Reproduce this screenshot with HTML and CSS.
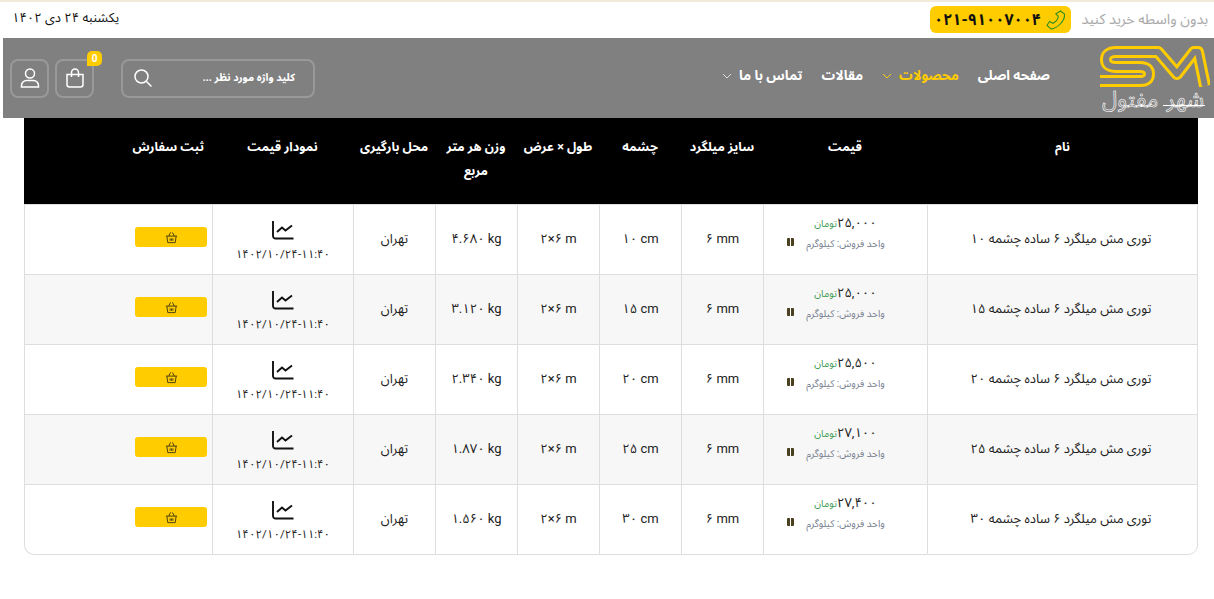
FILE: index.html
```html
<!DOCTYPE html>
<html lang="fa" dir="rtl">
<head>
<meta charset="utf-8">
<title>شهر مفتول</title>
<link rel="stylesheet" href="styles.css">
</head>
<body>
<div class="topbar">
  <div class="top-contact">
    <span class="top-note">بدون واسطه خرید کنید</span>
    <a class="phone-pill">
      <svg class="phone-icon" viewBox="0 0 20 20"><path d="M14.500 1l4 3c.8 6.500-7 14.500-13.500 15l-4-3.500 2.500-4 3.500 1.800 1.500-1c1.500-1 3-3 3.500-4.500l.3-1.500-2.500-2.500z"/></svg>
      <span class="phone-num" dir="ltr">۰۲۱-۹۱۰۰۷۰۰۴</span>
    </a>
  </div>
  <span class="top-date">یکشنبه ۲۴ دی ۱۴۰۲</span>
</div>
<header class="mainbar">
  <div class="logo">
    <svg class="logo-mark" viewBox="0 0 112 48">
      <path class="ribbon" d="M60 8H18C11 8 8 11 8 15.500S11 23 18 23H42C49 23 51 26 51 30S49 37 42 37H2"/>
      <path class="ribbon" d="M56 8H60L79 30L96 8H100L107 42"/>
      <path class="ribbon-in" d="M60 8H18C11 8 8 11 8 15.500S11 23 18 23H42C49 23 51 26 51 30S49 37 42 37H2"/>
      <path class="ribbon-in" d="M56 8H60L79 30L96 8H100L107 42"/>
    </svg>
    <span class="logo-text">شهر مفتول</span>
  </div>
  <nav class="nav">
    <a class="nav-item">صفحه اصلی</a>
    <a class="nav-item nav-active">محصولات
      <svg class="chev" viewBox="0 0 10 6"><path d="M1 1l4 4 4-4"/></svg></a>
    <a class="nav-item">مقالات</a>
    <a class="nav-item">تماس با ما
      <svg class="chev" viewBox="0 0 10 6"><path d="M1 1l4 4 4-4"/></svg></a>
  </nav>
  <div class="tools">
    <div class="search">
      <span class="search-text">کلید واژه مورد نظر ...</span>
      <svg class="tool-svg" viewBox="0 0 20 20"><circle cx="8.500" cy="8.500" r="6.500"/><path d="M13.500 13.500l5 5"/></svg>
    </div>
    <div class="tool-btn">
      <span class="badge">0</span>
      <svg class="tool-svg" viewBox="0 0 20 20"><path d="M2 6.500h16v10a2.500 2.500 0 0 1-2.500 2.500h-11A2.500 2.500 0 0 1 2 16.500z"/><path d="M6.500 9V4.500a3.500 3.500 0 0 1 7 0V9"/></svg>
    </div>
    <div class="tool-btn">
      <svg class="tool-svg" viewBox="0 0 20 20"><circle cx="10" cy="5.500" r="4.500"/><path d="M1.500 19v-1.500a5 5 0 0 1 5-5h7a5 5 0 0 1 5 5V19z"/></svg>
    </div>
  </div>
</header>
<main class="content">
  <table class="products">
    <colgroup>
      <col class="c-name"><col class="c-price"><col class="c-n"><col class="c-n"><col class="c-n"><col class="c-n"><col class="c-n"><col class="c-chart"><col class="c-order">
    </colgroup>
    <thead>
      <tr>
        <th><div class="th-in">نام</div></th>
        <th><div class="th-in">قیمت</div></th>
        <th><div class="th-in">سایز میلگرد</div></th>
        <th><div class="th-in">چشمه</div></th>
        <th><div class="th-in">طول × عرض</div></th>
        <th><div class="th-in th-tall">وزن هر متر مربع</div></th>
        <th><div class="th-in">محل بارگیری</div></th>
        <th><div class="th-in">نمودار قیمت</div></th>
        <th><div class="th-in th-last">ثبت سفارش</div></th>
      </tr>
    </thead>
    <tbody>
      <tr>
        <td class="td-name">توری مش میلگرد ۶ ساده چشمه ۱۰</td>
        <td><div class="price"><i class="mini"></i><div class="price-line"><b class="amount">۲۵,۰۰۰</b><span class="toman">تومان</span></div><div class="unit">واحد فروش: کیلوگرم</div></div></td>
        <td><span dir="ltr">۶ mm</span></td><td><span dir="ltr">۱۰ cm</span></td><td><span dir="ltr">۲×۶ m</span></td><td><span dir="ltr">۴.۶۸۰ kg</span></td>
        <td>تهران</td>
        <td class="td-chart"><svg class="chart" viewBox="0 0 22 20"><path d="M1 1v15a2.500 2.500 0 0 0 2.500 2.500H21.500"/><path d="M5 12l5-4.500 3.500 3L20 5.500"/></svg><div class="stamp">۱۴۰۲/۱۰/۲۴-۱۱:۴۰</div></td>
        <td class="td-order"><a class="buy"><svg class="basket" viewBox="0 0 14 14"><path d="M1 5.500h12M2 5.500l1 7h8l1-7M4 5.500l2-4M10 5.500l-2-4M5.500 8v2.500M7 8v2.500M8.500 8v2.500"/></svg></a></td>
      </tr>
      <tr>
        <td class="td-name">توری مش میلگرد ۶ ساده چشمه ۱۵</td>
        <td><div class="price"><i class="mini"></i><div class="price-line"><b class="amount">۲۵,۰۰۰</b><span class="toman">تومان</span></div><div class="unit">واحد فروش: کیلوگرم</div></div></td>
        <td><span dir="ltr">۶ mm</span></td><td><span dir="ltr">۱۵ cm</span></td><td><span dir="ltr">۲×۶ m</span></td><td><span dir="ltr">۳.۱۲۰ kg</span></td>
        <td>تهران</td>
        <td class="td-chart"><svg class="chart" viewBox="0 0 22 20"><path d="M1 1v15a2.500 2.500 0 0 0 2.500 2.500H21.500"/><path d="M5 12l5-4.500 3.500 3L20 5.500"/></svg><div class="stamp">۱۴۰۲/۱۰/۲۴-۱۱:۴۰</div></td>
        <td class="td-order"><a class="buy"><svg class="basket" viewBox="0 0 14 14"><path d="M1 5.500h12M2 5.500l1 7h8l1-7M4 5.500l2-4M10 5.500l-2-4M5.500 8v2.500M7 8v2.500M8.500 8v2.500"/></svg></a></td>
      </tr>
      <tr>
        <td class="td-name">توری مش میلگرد ۶ ساده چشمه ۲۰</td>
        <td><div class="price"><i class="mini"></i><div class="price-line"><b class="amount">۲۵,۵۰۰</b><span class="toman">تومان</span></div><div class="unit">واحد فروش: کیلوگرم</div></div></td>
        <td><span dir="ltr">۶ mm</span></td><td><span dir="ltr">۲۰ cm</span></td><td><span dir="ltr">۲×۶ m</span></td><td><span dir="ltr">۲.۳۴۰ kg</span></td>
        <td>تهران</td>
        <td class="td-chart"><svg class="chart" viewBox="0 0 22 20"><path d="M1 1v15a2.500 2.500 0 0 0 2.500 2.500H21.500"/><path d="M5 12l5-4.500 3.500 3L20 5.500"/></svg><div class="stamp">۱۴۰۲/۱۰/۲۴-۱۱:۴۰</div></td>
        <td class="td-order"><a class="buy"><svg class="basket" viewBox="0 0 14 14"><path d="M1 5.500h12M2 5.500l1 7h8l1-7M4 5.500l2-4M10 5.500l-2-4M5.500 8v2.500M7 8v2.500M8.500 8v2.500"/></svg></a></td>
      </tr>
      <tr>
        <td class="td-name">توری مش میلگرد ۶ ساده چشمه ۲۵</td>
        <td><div class="price"><i class="mini"></i><div class="price-line"><b class="amount">۲۷,۱۰۰</b><span class="toman">تومان</span></div><div class="unit">واحد فروش: کیلوگرم</div></div></td>
        <td><span dir="ltr">۶ mm</span></td><td><span dir="ltr">۲۵ cm</span></td><td><span dir="ltr">۲×۶ m</span></td><td><span dir="ltr">۱.۸۷۰ kg</span></td>
        <td>تهران</td>
        <td class="td-chart"><svg class="chart" viewBox="0 0 22 20"><path d="M1 1v15a2.500 2.500 0 0 0 2.500 2.500H21.500"/><path d="M5 12l5-4.500 3.500 3L20 5.500"/></svg><div class="stamp">۱۴۰۲/۱۰/۲۴-۱۱:۴۰</div></td>
        <td class="td-order"><a class="buy"><svg class="basket" viewBox="0 0 14 14"><path d="M1 5.500h12M2 5.500l1 7h8l1-7M4 5.500l2-4M10 5.500l-2-4M5.500 8v2.500M7 8v2.500M8.500 8v2.500"/></svg></a></td>
      </tr>
      <tr>
        <td class="td-name">توری مش میلگرد ۶ ساده چشمه ۳۰</td>
        <td><div class="price"><i class="mini"></i><div class="price-line"><b class="amount">۲۷,۴۰۰</b><span class="toman">تومان</span></div><div class="unit">واحد فروش: کیلوگرم</div></div></td>
        <td><span dir="ltr">۶ mm</span></td><td><span dir="ltr">۳۰ cm</span></td><td><span dir="ltr">۲×۶ m</span></td><td><span dir="ltr">۱.۵۶۰ kg</span></td>
        <td>تهران</td>
        <td class="td-chart"><svg class="chart" viewBox="0 0 22 20"><path d="M1 1v15a2.500 2.500 0 0 0 2.500 2.500H21.500"/><path d="M5 12l5-4.500 3.500 3L20 5.500"/></svg><div class="stamp">۱۴۰۲/۱۰/۲۴-۱۱:۴۰</div></td>
        <td class="td-order"><a class="buy"><svg class="basket" viewBox="0 0 14 14"><path d="M1 5.500h12M2 5.500l1 7h8l1-7M4 5.500l2-4M10 5.500l-2-4M5.500 8v2.500M7 8v2.500M8.500 8v2.500"/></svg></a></td>
      </tr>
    </tbody>
  </table>
</main>
</body>
</html>
```
FILE: styles.css
```css
* { box-sizing: border-box; }
html, body { margin: 0; padding: 0; }
body {
  background: #fff;
  color: #222;
  font-family: Roboto, "Noto Sans Arabic", "Noto Naskh Arabic", "DejaVu Sans", sans-serif;
  font-size: 13px;
  overflow: hidden;
  height: 599px;
}
.topbar {
  height: 38px;
  border-top: 2px solid #f1e9da;
  padding: 0 6px 0 12px;
  display: flex;
  justify-content: space-between;
  align-items: center;
}
.top-contact { display: flex; align-items: center; gap: 11px; margin-top: -1px; }
.top-note { color: #a9a9a9; font-size: 14.400px; }
.top-date { color: #111; font-size: 13px; margin-top: -4px; }
.phone-pill {
  width: 141px;
  height: 27px;
  background: #ffcc00;
  border-radius: 6px;
  display: flex;
  align-items: center;
  justify-content: center;
  gap: 5px;
}
.phone-num { font-size: 16px; font-weight: 700; color: #111; }
.phone-icon { width: 20px; height: 20px; fill: none; stroke: #2f8f23; stroke-width: 1.100; }
.mainbar {
  margin-left: 3px;
  height: 80px;
  background: #808080;
  display: flex;
  align-items: center;
  padding: 0 6px 0 7px;
}
.logo { width: 108px; height: 76px; position: relative; flex: none; }
.logo-mark { width: 112px; height: 48px; display: block; margin-right: -2px; margin-top: 4px; }
.ribbon { fill: none; stroke: #ffcc00; stroke-width: 12; stroke-linejoin: round; }
.ribbon-in { fill: none; stroke: #808080; stroke-width: 6; stroke-linejoin: round; }
.logo-text {
  display: block;
  color: transparent;
  -webkit-text-stroke: 0.6px #fff;
  font-size: 22px;
  word-spacing: 3px;
  text-align: left;
  line-height: 22px;
  margin-top: -3px;
  padding-left: 2px;
}
.logo-text::after {
  content: "";
  position: absolute;
  right: 3px;
  top: 65px;
  width: 42px;
  height: 1px;
  background: #fff;
}
.nav { display: flex; align-items: center; gap: 19px; margin-right: 50px; margin-top: -5px; }
.nav-item { color: #fff; font-size: 13.500px; font-weight: 700; display: flex; align-items: center; gap: 7px; }
.nav-active { color: #ffcc00; }
.chev { width: 10px; height: 6px; fill: none; stroke: #ddd; stroke-width: 1; }
.nav-active .chev { stroke: #ffcc00; }
.tools { margin-right: auto; display: flex; gap: 6px; }
.search {
  width: 194px;
  height: 39px;
  border: 2px solid #999;
  border-radius: 8px;
  display: flex;
  align-items: center;
  justify-content: space-between;
  padding: 0 18px 0 10px;
  color: #fff;
}
.search-text { font-size: 10.500px; font-weight: 700; }
.tool-btn {
  width: 39px;
  height: 39px;
  border: 2px solid #999;
  border-radius: 8px;
  display: flex;
  align-items: center;
  justify-content: center;
  position: relative;
}
.tool-svg { width: 20px; height: 20px; fill: none; stroke: #fff; stroke-width: 1.500; }
.badge {
  position: absolute;
  top: -10px;
  right: -10px;
  width: 15px;
  height: 15px;
  background: #ffcc00;
  color: #fff;
  border-radius: 5px 5px 5px 0;
  font-size: 10px;
  font-weight: 700;
  text-align: center;
  line-height: 15px;
}
.tools .search { margin-left: 21px; }
.content { padding: 0 16px 0 24px; }
.products {
  width: 1174px;
  table-layout: fixed;
  border-collapse: separate;
  border-spacing: 0;
  text-align: center;
}
.c-name { width: 271px; }
.c-price { width: 164px; }
.c-n { width: 82px; }
.c-chart { width: 141px; }
.c-order { width: 188px; }
.products th { background: #000; color: #fff; padding: 0; vertical-align: top; font-size: 12.600px; font-weight: 700; }
.th-in {
  height: 67px;
  margin-left: -1px;
  border-left: 1px solid #fff;
  padding: 17px 2px 0;
  line-height: 24px;
}
.th-tall { height: 86px; padding: 17px 8px 0; }
.products th:last-child .th-in { border-left: 0; margin-left: 0; text-align: right; padding-right: 8px; }
.products td {
  height: 70px;
  padding: 0 0 2px;
  border-top: 1px solid #dedede;
  border-left: 1px solid #dedede;
  font-size: 13px;
  vertical-align: middle;
}
.products .td-name { padding-right: 3px; }
.products td:first-child { border-right: 1px solid #dedede; }
.products td:last-child { border-left: 1px solid #dedede; }
.products tr:nth-child(even) td { background: #f7f7f7; }
.products tr:last-child td { height: 71px; border-bottom: 1px solid #dedede; }
.products tr:last-child td:first-child { border-bottom-right-radius: 10px; }
.products tr:last-child td:last-child { border-bottom-left-radius: 10px; }
.price { position: relative; width: 80px; margin: 0 auto 8px; }
.mini {
  position: absolute;
  left: -19px;
  top: 24px;
  width: 7px;
  height: 8px;
  background: linear-gradient(90deg, #4a4020 0 3px, #fff 3px 4px, #4a4020 4px 7px);
  border-radius: 1px;
}
.price-line { white-space: nowrap; text-align: center; line-height: 18px; }
.amount { font-size: 13px; font-weight: 400; color: #222; }
.toman { font-size: 10px; color: #3a9a50; }
.unit { font-size: 10px; color: #77808f; white-space: nowrap; line-height: 22px; text-align: center; }
.td-chart, .td-order { vertical-align: top !important; }
.chart { display: block; width: 22px; height: 20px; margin: 15px auto 0; fill: none; stroke: #111; stroke-width: 1.900; }
.stamp { font-size: 11.500px; margin-top: 2px; color: #222; }
.buy {
  display: flex;
  align-items: center;
  justify-content: center;
  width: 72px;
  height: 20px;
  margin: 22px 5px 0 0;
  background: #ffcc00;
  border-radius: 3px;
}
.basket { width: 13px; height: 13px; fill: none; stroke: #443a10; stroke-width: 1; }
```
